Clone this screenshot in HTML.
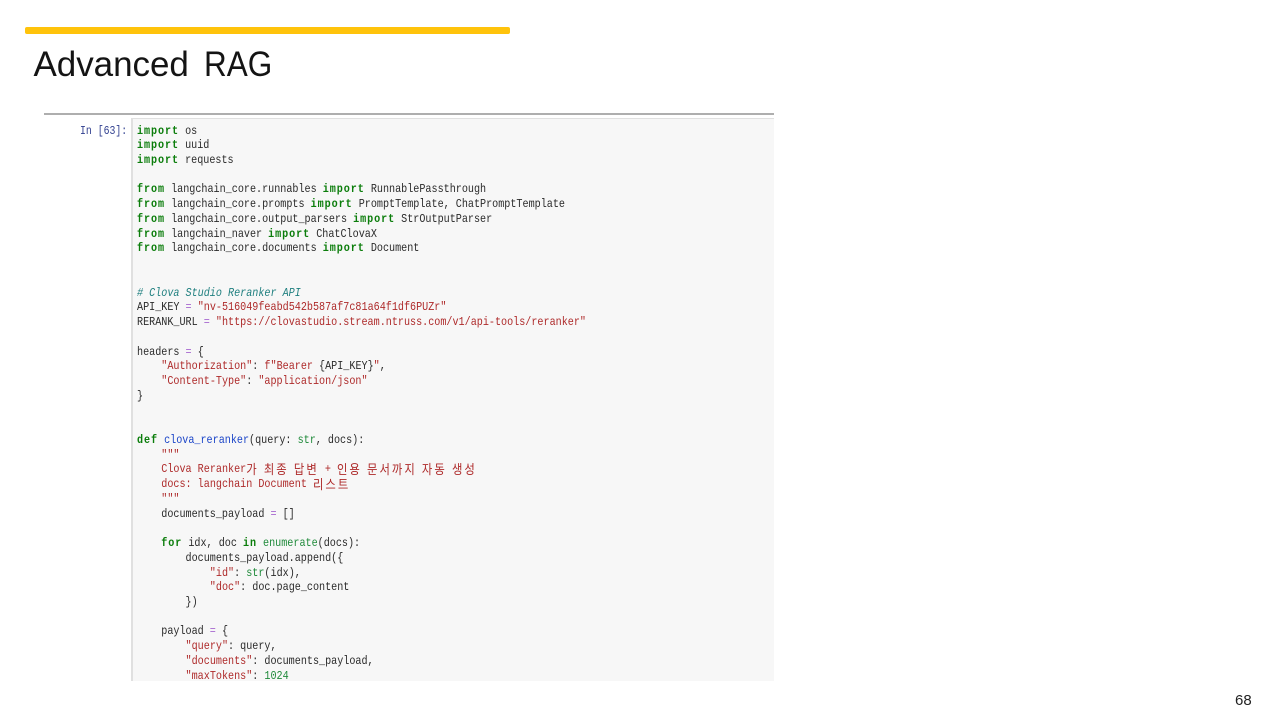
<!DOCTYPE html>
<html lang="ko"><head><meta charset="utf-8"><title>Advanced RAG</title>
<style>
html,body{margin:0;padding:0;background:#fff;width:1280px;height:720px;overflow:hidden}
body{position:relative;font-family:"Liberation Sans","Noto Sans CJK KR",sans-serif;color:#000}
#bar{position:absolute;left:24.5px;top:27px;width:485.5px;height:6.5px;background:#ffc30b;border-radius:2px}
.t{position:absolute;top:42px;font-size:35px;line-height:46px;white-space:nowrap;color:#141414;transform-origin:left top}
#t1{left:33.5px;letter-spacing:-.05px}
#t2{left:204px;transform:scaleX(.9)}
#num{position:absolute;left:1235px;top:692px;font-size:15px;line-height:18px;color:#222}
#shot{position:absolute;left:0;top:0;width:774px;height:681px;overflow:hidden;filter:blur(.3px)}
#rule{position:absolute;left:44px;top:113px;width:730px;height:1.5px;background:#aeaeae}
#cell{position:absolute;left:131px;top:118px;width:660px;height:600px;background:#f7f7f7;border:1px solid #e0e0e0;border-left-width:2px;box-sizing:border-box}
#prompt{position:absolute;left:80px;top:124.5px;font:11.5px/14.73px "Liberation Mono",monospace;color:#303f8f;white-space:pre;transform:scaleX(.855);transform-origin:left top}
#code{position:absolute;left:137px;top:124.5px;margin:0;font:11.6px/14.73px "Liberation Mono",monospace;color:#2a2a2a;white-space:pre;transform:scaleX(.872);transform-origin:left top}
b{color:#0b7d0b;font-weight:bold;letter-spacing:1.07px}
.s{color:#ae2a2a}.o{color:#a868d0}.c{color:#1f7f7f;font-style:italic}.f{color:#1a44c8}.n{color:#1f8a3a}
.k{font-family:"Noto Sans CJK KR",sans-serif;font-size:13px;letter-spacing:2.3px;line-height:0;position:relative;top:2px}
</style></head><body>
<div id="bar"></div>
<div class="t" id="t1">Advanced</div>
<div class="t" id="t2">RAG</div>
<div id="shot">
<div id="rule"></div>
<div id="cell"></div>
<div id="prompt">In [63]:</div>
<pre id="code"><b>import</b> os
<b>import</b> uuid
<b>import</b> requests

<b>from</b> langchain_core.runnables <b>import</b> RunnablePassthrough
<b>from</b> langchain_core.prompts <b>import</b> PromptTemplate, ChatPromptTemplate
<b>from</b> langchain_core.output_parsers <b>import</b> StrOutputParser
<b>from</b> langchain_naver <b>import</b> ChatClovaX
<b>from</b> langchain_core.documents <b>import</b> Document


<span class="c"># Clova Studio Reranker API</span>
API_KEY <span class="o">=</span> <span class="s">"nv-516049feabd542b587af7c81a64f1df6PUZr"</span>
RERANK_URL <span class="o">=</span> <span class="s">"https://clovastudio.stream.ntruss.com/v1/api-tools/reranker"</span>

headers <span class="o">=</span> {
    <span class="s">"Authorization"</span>: <span class="s">f"Bearer </span>{API_KEY}<span class="s">"</span>,
    <span class="s">"Content-Type"</span>: <span class="s">"application/json"</span>
}


<b>def</b> <span class="f">clova_reranker</span>(query: <span class="n">str</span>, docs):
    <span class="s">"""</span>
    <span class="s">Clova Reranker<span class="k">가 최종 답변</span> + <span class="k">인용 문서까지 자동 생성</span></span>
    <span class="s">docs: langchain Document <span class="k">리스트</span></span>
    <span class="s">"""</span>
    documents_payload <span class="o">=</span> []

    <b>for</b> idx, doc <b>in</b> <span class="n">enumerate</span>(docs):
        documents_payload.append({
            <span class="s">"id"</span>: <span class="n">str</span>(idx),
            <span class="s">"doc"</span>: doc.page_content
        })

    payload <span class="o">=</span> {
        <span class="s">"query"</span>: query,
        <span class="s">"documents"</span>: documents_payload,
        <span class="s">"maxTokens"</span>: <span class="n">1024</span></pre>
</div>
<div id="num">68</div>
</body></html>
